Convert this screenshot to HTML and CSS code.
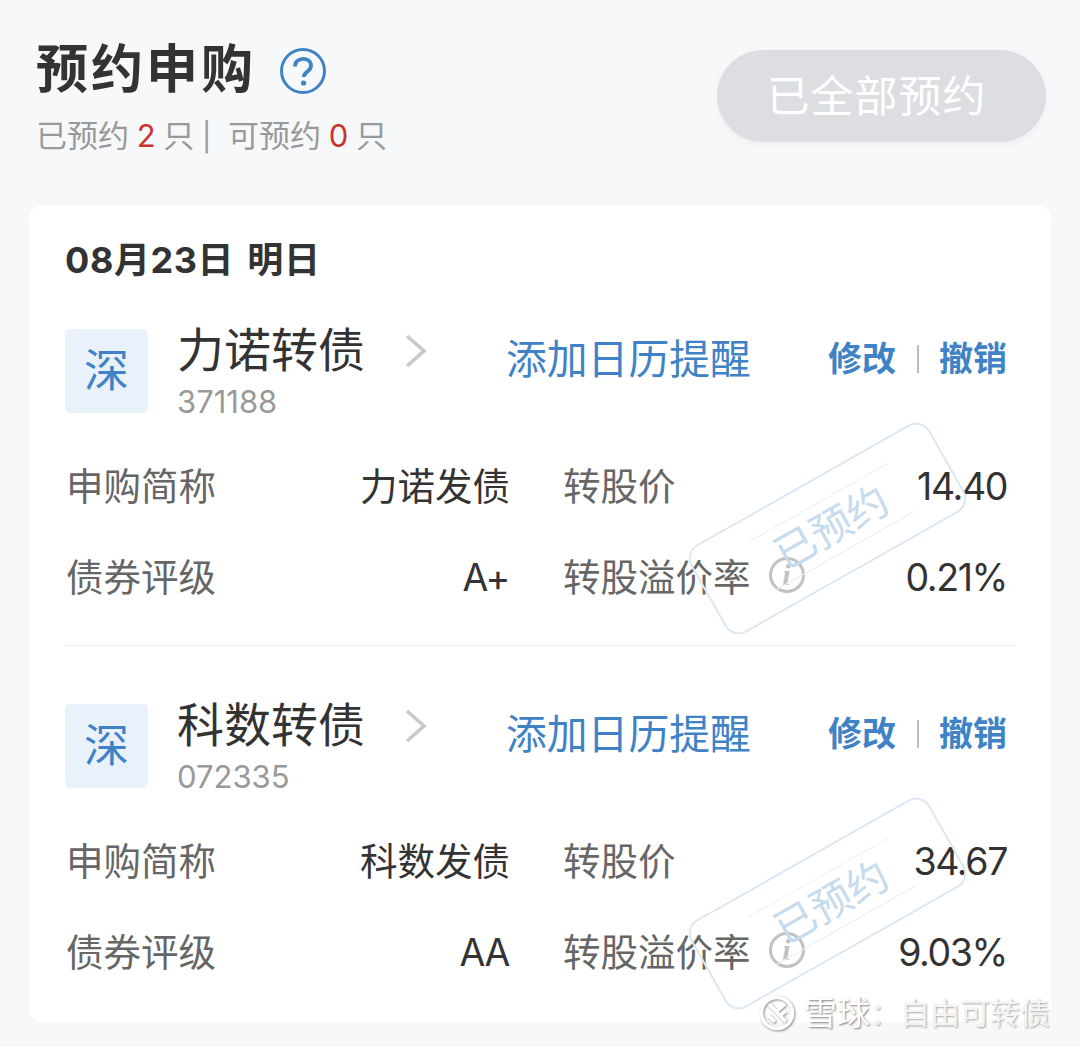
FILE: index.html
```html
<!DOCTYPE html>
<html lang="zh">
<head>
    <meta charset="UTF-8">
    <meta name="viewport" content="width=device-width, initial-scale=1.0">
    <title>预约申购</title>
    <link rel="stylesheet" href="styles.css">
</head>
<body>

<div class="page">
    <div class="header">
        <div>
            <div class="title-row">
                <h1>预约申购</h1>
                <svg class="help" viewBox="0 0 46 46">
                    <circle cx="23" cy="23" r="21.500" fill="none" stroke="#3f83c6" stroke-width="3"/>
                    <path d="M15 18.500c0-4.800 3.500-7.700 8-7.700s8 2.700 8 7c0 3.200-1.900 4.700-4.200 6.300-2 1.400-3 2.500-3 5" fill="none" stroke="#3f83c6" stroke-width="3.800"/>
                    <circle cx="23.600" cy="35" r="2.600" fill="#3f83c6"/>
                </svg>
            </div>
            <div class="summary">已预约 <span class="red">2</span> 只 <span class="sep">|</span> 可预约 <span class="red">0</span> 只</div>
        </div>
        <div class="all-btn">已全部预约</div>
    </div>

    <div class="card">
        <div class="date">08月23日 明日</div>

        <div class="item">
            <div class="item-top">
                <div class="badge">深</div>
                <div class="name-box">
                    <div class="name">力诺转债</div>
                    <div class="code">371188</div>
                </div>
                <svg class="arrow" viewBox="0 0 22 34"><path d="M2 2l17 15L2 32" fill="none" stroke="#c8c8c8" stroke-width="3.600"/></svg>
                <div class="calendar">添加日历提醒</div>
                <div class="actions">修改<span class="bar"></span>撤销</div>
            </div>
            <div class="rows">
                <div class="label">申购简称</div><div class="value">力诺发债</div>
                <div class="label right-col">转股价</div><div class="value num">14.40</div>
                <div class="label">债券评级</div><div class="value num">A+</div>
                <div class="label right-col">转股溢价率<span class="info">i</span></div><div class="value num">0.21%</div>
            </div>
            <div class="stamp"><div class="stamp-text">已预约</div></div>
        </div>

        <div class="item">
            <div class="item-top">
                <div class="badge">深</div>
                <div class="name-box">
                    <div class="name">科数转债</div>
                    <div class="code">072335</div>
                </div>
                <svg class="arrow" viewBox="0 0 22 34"><path d="M2 2l17 15L2 32" fill="none" stroke="#c8c8c8" stroke-width="3.600"/></svg>
                <div class="calendar">添加日历提醒</div>
                <div class="actions">修改<span class="bar"></span>撤销</div>
            </div>
            <div class="rows">
                <div class="label">申购简称</div><div class="value">科数发债</div>
                <div class="label right-col">转股价</div><div class="value num">34.67</div>
                <div class="label">债券评级</div><div class="value num">AA</div>
                <div class="label right-col">转股溢价率<span class="info">i</span></div><div class="value num">9.03%</div>
            </div>
            <div class="stamp"><div class="stamp-text">已预约</div></div>
        </div>
    </div>

    <div class="watermark">
        <svg class="wm-logo" viewBox="0 0 36 36">
            <circle cx="18" cy="18" r="15.500" fill="none" stroke="#fff" stroke-width="3.500"/>
            <path d="M10 9l17 18M9 20l7 7M26 9l-8 7M27 16l-5 4" fill="none" stroke="#fff" stroke-width="3.500"/>
        </svg>
        <span class="wm-main">雪球</span><span class="wm-sub">：自由可转债</span>
    </div>
</div>

</body>
</html>
```

FILE: styles.css
```css
html, body {
    margin: 0;
    padding: 0;
}
body {
    font-family: Inter, "Noto Sans CJK SC", sans-serif;
    background-color: #f7f8fa;
    color: #333;
}
.page {
    position: relative;
    width: 1080px;
    height: 1047px;
    overflow: hidden;
}
.header {
    display: flex;
    justify-content: space-between;
    padding: 39px 34px 0 36px;
    height: 167px;
    box-sizing: border-box;
}
.title-row {
    display: flex;
    align-items: center;
    height: 62px;
}
h1 {
    margin: 0;
    font-size: 52px;
    line-height: 62px;
    letter-spacing: 3px;
    font-weight: 700;
    color: #333;
}
.help {
    width: 46px;
    height: 46px;
    margin: 2px 0 0 24px;
}
.summary {
    margin-top: 13px;
    font-size: 31px;
    line-height: 44px;
    word-spacing: -1px;
    color: #999;
}
.red {
    color: #c8342f;
}
.sep {
    font-size: 28px;
    margin: 0 9px 0 0;
}
.all-btn {
    margin-top: 11px;
    width: 329px;
    height: 92px;
    box-sizing: border-box;
    padding-right: 10px;
    line-height: 92px;
    text-align: center;
    border-radius: 46px;
    background-color: #dcdee2;
    color: #fff;
    font-size: 43px;
    letter-spacing: 1px;
    box-shadow: 0 3px 8px rgba(0, 0, 0, 0.04);
}
.card {
    width: 1022px;
    height: 817px;
    box-sizing: border-box;
    margin: 38px 0 0 29px;
    padding: 28px 37px 0 36px;
    background-color: #fff;
    border-radius: 14px;
}
.date {
    font-size: 36px;
    line-height: 54px;
    letter-spacing: 0.600px;
    word-spacing: 4px;
    font-weight: 700;
    color: #333;
}
.item {
    position: relative;
    box-sizing: border-box;
}
.date + .item {
    height: 358px;
    padding-top: 42px;
}
.item + .item {
    height: 375px;
    border-top: 1px solid #eee;
    padding-top: 58px;
}
.item-top {
    display: flex;
    align-items: flex-start;
    height: 84px;
}
.badge {
    width: 83px;
    height: 84px;
    line-height: 84px;
    text-align: center;
    border-radius: 5px;
    background-color: #e9f1fa;
    color: #3f83c6;
    font-size: 45px;
}
.name-box {
    width: 228px;
    margin-left: 29px;
}
.name {
    margin-top: -9px;
    font-size: 47px;
    line-height: 60px;
    color: #333;
}
.code {
    margin-top: 2px;
    font-size: 31px;
    line-height: 40px;
    color: #999;
}
.arrow {
    width: 22px;
    height: 34px;
    margin-top: 5px;
}
.calendar {
    margin-left: 79px;
    width: 322px;
    font-size: 40.800px;
    line-height: 60px;
    color: #3f83c6;
}
.actions {
    display: flex;
    align-items: center;
    font-size: 34px;
    line-height: 60px;
    font-weight: 700;
    color: #3f83c6;
}
.bar {
    width: 2px;
    height: 28px;
    margin: 0 20.500px;
    background-color: #bbb;
}
.rows {
    display: grid;
    grid-template-columns: 294px 149px 331px 167px;
    grid-auto-rows: 91px;
    align-items: center;
    margin-top: 25px;
    padding-left: 1px;
    font-size: 37.500px;
}
.label {
    color: #666;
    white-space: nowrap;
}
.right-col {
    display: flex;
    align-items: center;
    margin-left: 54px;
}
.value {
    text-align: right;
    color: #333;
    white-space: nowrap;
}
.num {
    padding-top: 6px;
    letter-spacing: -1.400px;
}
.info {
    width: 36px;
    height: 36px;
    box-sizing: border-box;
    margin-left: 18px;
    border: 3px solid #c2c2c2;
    border-radius: 50%;
    text-align: center;
    line-height: 30px;
    font-family: "Liberation Serif", serif;
    font-style: italic;
    font-weight: 700;
    font-size: 30px;
    color: #c2c2c2;
    flex: none;
}
.stamp {
    position: absolute;
    left: 625px;
    top: 191px;
    width: 275px;
    height: 101px;
    padding-left: 8px;
    border: 2px solid #dbe8f3;
    border-radius: 16px;
    box-sizing: border-box;
    transform: rotate(-29.500deg);
    display: flex;
    align-items: center;
    justify-content: center;
}
.item + .item .stamp {
    top: 207px;
}
.stamp-text {
    width: 160px;
    text-align: center;
    font-size: 41px;
    line-height: 54px;
    color: #c6dbee;
    border-top: 1px solid #e9f0f6;
    border-bottom: 1px solid #e9f0f6;
}
.watermark {
    position: absolute;
    left: 759px;
    top: 994px;
    display: flex;
    align-items: center;
    font-size: 30px;
    line-height: 38px;
    color: #fff;
    text-shadow: 1px 1px 2px rgba(0, 0, 0, 0.5);
    white-space: nowrap;
}
.wm-logo {
    width: 36px;
    height: 36px;
    margin-right: 9px;
    filter: drop-shadow(1px 1px 1px rgba(0, 0, 0, 0.45));
}
.wm-main {
    font-size: 33px;
}
.wm-sub {
    color: #f4f4f4;
    text-shadow: 1px 1px 2px rgba(0, 0, 0, 0.35);
}
```
